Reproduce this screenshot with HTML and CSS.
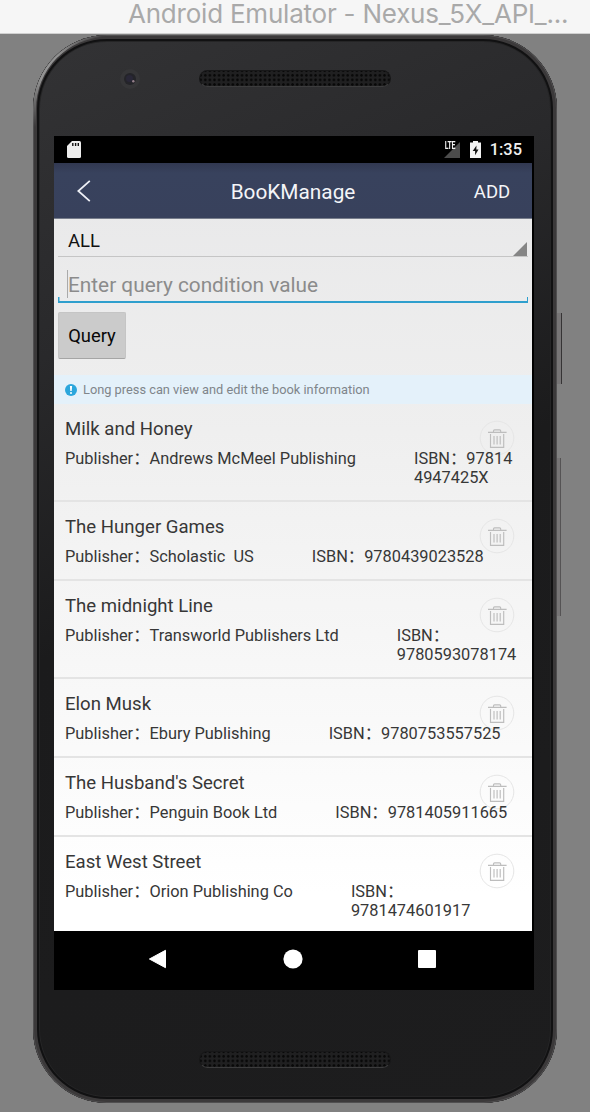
FILE: index.html
```html
<!DOCTYPE html>
<html lang="en">
<head>
<meta charset="utf-8">
<title>BooKManage</title>
<link rel="stylesheet" href="styles.css">
</head>
<body>
<svg class="defs" width="0" height="0">
  <symbol id="trash" viewBox="0 0 36 36">
    <circle cx="18" cy="18" r="16.8" fill="none" stroke="#e6e6e6"/>
    <path d="M9 12.3h18.6M14.5 12v-1.1q0-1.1 1.1-1.1h5q1.1 0 1.1 1.1V12M11.5 14v13.3h13.2V14M15 16v8.4M18.1 16v8.4M21.2 16v8.4" fill="none" stroke="#bdbdbd" stroke-width="1.15"/>
  </symbol>
</svg>
<div class="titlebar"><span>Android Emulator - Nexus_5X_API_...</span></div>
<main class="desk">
  <div class="phone">
    <i class="side power"></i><i class="side volume"></i>
    <div class="forehead">
      <svg class="camera" viewBox="0 0 20 20"><circle cx="10" cy="10" r="10" fill="#363638"/><circle cx="10" cy="10" r="6" fill="#242429"/><circle cx="9.5" cy="9.5" r="3.5" fill="#292737"/><circle cx="13.3" cy="12.3" r="1.2" fill="#95808a"/></svg>
      <div class="speaker"></div>
    </div>
    <div class="screen">
      <div class="status">
        <svg class="sd" viewBox="0 0 14 17"><path d="M5 0h7.5Q14 0 14 1.5v14q0 1.5-1.5 1.5h-11Q0 17 0 15.5V5z" fill="#eee"/><path d="M5.8 2v3M8.6 2v3M11.3 2v3" stroke="#111" stroke-width="1.4"/></svg>
        <div class="indicators">
          <span class="lte">LTE</span>
          <svg class="signal" viewBox="0 0 16 16"><path d="M16 0v16H0z" fill="#4c4c4c"/></svg>
          <svg class="battery" viewBox="0 0 11 17"><path d="M3 0h5v1.5h3V17H0V1.5h3z" fill="#f2f2f2"/><path d="M6.5 4.5L2.7 10h2.4v4.3L8.5 8.5H6.3z" fill="#111"/></svg>
          <span class="clock">1:35</span>
        </div>
      </div>
      <div class="app">
        <header class="navbar">
          <svg class="back" viewBox="0 0 14 22"><path d="M12.8.8L1.3 11l11.5 10.2" fill="none" stroke="#eef0f6" stroke-width="1.8"/></svg>
          <h1>BooKManage</h1>
          <span class="add">ADD</span>
        </header>
        <div class="form">
          <div class="spinner"><span>ALL</span><svg viewBox="0 0 14 14"><path d="M14 0v14H0z" fill="#858585"/></svg></div>
          <div class="field"><span>Enter query condition value</span></div>
          <div class="query">Query</div>
        </div>
        <div class="hint"><svg viewBox="0 0 12 12"><circle cx="6" cy="6" r="6" fill="#2ba6dc"/><path d="M4.9 2h2.2l-.4 5H5.3z" fill="#fff"/><circle cx="6" cy="8.9" r="1" fill="#fff"/></svg><span>Long press can view and edit the book information</span></div>
        <ul class="books">
          <li class="tall"><svg class="trash"><use href="#trash"/></svg><h2>Milk and Honey</h2><div class="meta"><span>Publisher：Andrews McMeel Publishing</span><span>ISBN：97814<br>4947425X</span></div></li>
          <li><svg class="trash"><use href="#trash"/></svg><h2>The Hunger Games</h2><div class="meta"><span>Publisher：Scholastic&nbsp; US</span><span>ISBN：9780439023528</span></div></li>
          <li class="tall"><svg class="trash"><use href="#trash"/></svg><h2>The midnight Line</h2><div class="meta"><span>Publisher：Transworld Publishers Ltd</span><span>ISBN：<br>9780593078174</span></div></li>
          <li><svg class="trash"><use href="#trash"/></svg><h2>Elon Musk</h2><div class="meta"><span>Publisher：Ebury Publishing</span><span>ISBN：9780753557525</span></div></li>
          <li><svg class="trash"><use href="#trash"/></svg><h2>The Husband's Secret</h2><div class="meta"><span>Publisher：Penguin Book Ltd</span><span>ISBN：9781405911665</span></div></li>
          <li class="tall"><svg class="trash"><use href="#trash"/></svg><h2>East West Street</h2><div class="meta"><span>Publisher：Orion Publishing Co</span><span>ISBN：<br>9781474601917</span></div></li>
        </ul>
      </div>
      <div class="softkeys">
        <svg viewBox="0 0 20 20"><path d="M17.5 1.3v17.4L1.4 10z" fill="#fff" stroke="#fff" stroke-linejoin="round"/></svg>
        <svg viewBox="0 0 20 20"><circle cx="10" cy="10" r="9.6" fill="#fff"/></svg>
        <svg viewBox="0 0 20 20"><rect x="1" y="1" width="18" height="18" rx="1" fill="#fff"/></svg>
      </div>
    </div>
    <div class="chin"><div class="speaker"></div></div>
  </div>
</main>
</body>
</html>
```
FILE: styles.css
```css
* { box-sizing: border-box; }
body { margin: 0; height: 1112px; overflow: hidden; background: #818181; font-family: Roboto, "Noto Sans CJK SC", sans-serif; }
svg { display: block; flex: none; }
.defs { position: absolute; }
.titlebar { height: 34px; background: #f6f6f6; border-bottom: 1px solid #d0d0d0; padding-left: 128px; font: 26px/27px Inter, sans-serif; color: #a9a9a9; white-space: nowrap; letter-spacing: -.22px; }
.desk { padding: 1px 0 0 33px; }
.phone { position: relative; width: 524px; height: 1068px; border-radius: 74px; padding: 0 21px;
  background: linear-gradient(155deg, #333335 0%, #29292b 25%, #1b1b1c 48%, #1d1d1e 100%);
  box-shadow: inset 0 0 0 1px #504f50, inset 0 0 0 4px #3b393a, inset 0 0 0 6px #111112, inset 0 0 0 7px #252526; }
.phone::before { content: ""; position: absolute; left: 0; top: 0; width: 90px; height: 110px; border: solid #939393; border-width: 2px 0 0 3px; border-radius: 74px 0 0 0; -webkit-mask-image: radial-gradient(circle at 20px 35px, #000 15px, transparent 60px); mask-image: radial-gradient(circle at 20px 35px, #000 15px, transparent 60px); }
.side { position: absolute; border: solid #363435; border-width: 0 1px 0 0; background: #777576; }
.power { left: 524px; top: 278px; width: 5px; height: 71px; }
.volume { left: 524px; top: 423px; width: 4px; height: 158px; border-color: #555354; }
.forehead { height: 101px; display: flex; align-items: flex-start; padding: 34px 0 0 66px; }
.camera { width: 20px; height: 20px; margin-right: 59px; }
.speaker { width: 192px; height: 17px; border-radius: 9px; background: radial-gradient(circle, #080808 1px, transparent 1.5px) 3px 2px / 4.6px 4.6px, #202021; border: 1px solid #171718; border-bottom-color: #3c3c3d; margin-top: 1px; }
.screen { width: 480px; height: 854px; background: #000; }
.status { height: 27px; display: flex; align-items: center; justify-content: space-between; padding: 0 12px 0 13px; color: #f0f0f0; }
.sd { width: 14px; height: 17px; }
.indicators { display: flex; align-items: center; height: 27px; }
.lte { font-size: 10.5px; line-height: 10px; font-weight: 700; letter-spacing: -.3px; margin: 0 -14px 8px 0; transform: scaleX(.66); position: relative; }
.signal { width: 16px; height: 16px; margin-right: 10px; }
.battery { width: 11px; height: 17px; margin-right: 9px; }
.clock { font-size: 16.4px; font-weight: 500; }
.app { width: 478px; height: 768px; background: linear-gradient(#e8e8e9, #efefef 35%, #fff 95%); }
.navbar { height: 56px; background: linear-gradient(#313851, #38425d 18%, #38415c); border-bottom: 1px solid #777d8b; display: grid; grid-template-columns: 80px 1fr 80px; align-items: center; color: #f4f5f8; }
.back { width: 14px; height: 22px; margin-left: 23px; }
h1 { margin: 2px 0 0; font-size: 20.8px; font-weight: 400; text-align: center; }
.add { font-size: 18.5px; text-align: center; margin-top: 2px; }
.form { height: 156px; padding: 0 4px; }
.spinner { height: 38px; padding: 0 1px 0 10px; border-bottom: 1px solid #c5c5c5; display: flex; justify-content: space-between; align-items: flex-end; font-size: 18.5px; line-height: 22px; color: #111; }
.spinner span { margin-bottom: 4px; }
.spinner svg { width: 14px; height: 14px; }
.field { height: 46px; color: #8b8b8b; font-size: 20.8px; line-height: 30px; padding: 13px 0 0 9px; background: linear-gradient(#2f9fcd, #2f9fcd) left bottom / 1.5px 6px no-repeat, linear-gradient(#2f9fcd, #2f9fcd) right bottom / 1.5px 6px no-repeat, linear-gradient(#2f9fcd, #2f9fcd) bottom / 100% 2px no-repeat; }
.field span { display: block; border-left: 1px solid #aaa; height: 28px; }
.query { width: 68px; height: 47px; margin-top: 9px; border-radius: 2px; background: #cbcbcb; border: 1px solid #c5c5c5; border-bottom-color: #a5a5a5; text-align: center; font-size: 18.4px; line-height: 46px; color: #080808; }
.hint { height: 29px; background: #e4f1fa; display: flex; align-items: center; gap: 6px; padding-left: 11px; color: #7f858a; font-size: 12.8px; }
.hint svg { width: 12px; height: 12px; }
.books { list-style: none; margin: 0; padding: 0; }
.books li { position: relative; height: 79px; padding: 13px 0 0 11px; border-bottom: 2px solid #e4e4e4; color: #373737; white-space: nowrap; }
.books .tall { height: 98px; }
.books li:last-child { border: 0; height: 93px; }
h2 { margin: 0 0 8px; font-size: 18.6px; line-height: 24px; font-weight: 400; }
.meta { position: relative; display: flex; gap: 58px; font-size: 16.37px; line-height: 19px; }
.trash { position: absolute; left: 425px; top: 16px; width: 36px; height: 36px; }
.softkeys { height: 59px; display: flex; justify-content: center; align-items: center; gap: 114.5px; padding: 0 3px 3px 0; }
.softkeys svg { width: 20px; height: 20px; }
.chin { padding: 60px 0 0 145px; }
```
